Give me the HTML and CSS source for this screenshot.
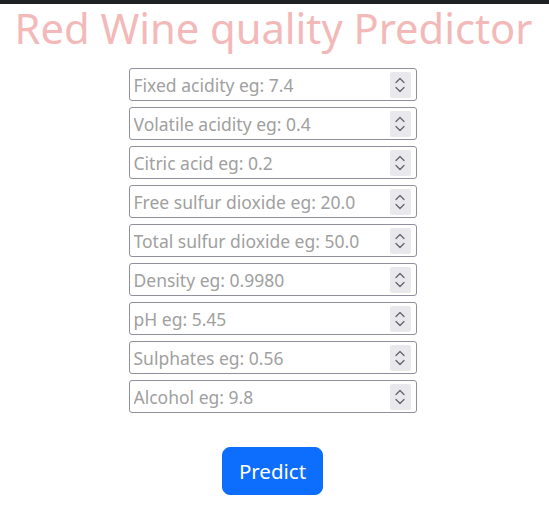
FILE: index.html
```html
<!DOCTYPE html>
<html lang="en">
<head>
<meta charset="utf-8">
<title>Red Wine quality Predictor</title>
<link rel="stylesheet" href="styles.css">
</head>
<body>
<div class="topbar"></div>
<main class="page">
<h1 class="title">Red Wine quality Predictor</h1>
<form class="form">
  <label class="field"><input class="field-input" type="text" placeholder="Fixed acidity eg: 7.4"><span class="spin"><svg width="12" height="20" viewBox="0 0 12 20"><path d="M2 7.5 L6 3.5 L10 7.5 M2 12.5 L6 16.5 L10 12.5" fill="none" stroke="#60606b" stroke-width="1.2" stroke-linecap="round" stroke-linejoin="round"/></svg></span></label>
  <label class="field"><input class="field-input" type="text" placeholder="Volatile acidity eg: 0.4"><span class="spin"><svg width="12" height="20" viewBox="0 0 12 20"><path d="M2 7.5 L6 3.5 L10 7.5 M2 12.5 L6 16.5 L10 12.5" fill="none" stroke="#60606b" stroke-width="1.2" stroke-linecap="round" stroke-linejoin="round"/></svg></span></label>
  <label class="field"><input class="field-input" type="text" placeholder="Citric acid eg: 0.2"><span class="spin"><svg width="12" height="20" viewBox="0 0 12 20"><path d="M2 7.5 L6 3.5 L10 7.5 M2 12.5 L6 16.5 L10 12.5" fill="none" stroke="#60606b" stroke-width="1.2" stroke-linecap="round" stroke-linejoin="round"/></svg></span></label>
  <label class="field"><input class="field-input" type="text" placeholder="Free sulfur dioxide eg: 20.0"><span class="spin"><svg width="12" height="20" viewBox="0 0 12 20"><path d="M2 7.5 L6 3.5 L10 7.5 M2 12.5 L6 16.5 L10 12.5" fill="none" stroke="#60606b" stroke-width="1.2" stroke-linecap="round" stroke-linejoin="round"/></svg></span></label>
  <label class="field"><input class="field-input" type="text" placeholder="Total sulfur dioxide eg: 50.0"><span class="spin"><svg width="12" height="20" viewBox="0 0 12 20"><path d="M2 7.5 L6 3.5 L10 7.5 M2 12.5 L6 16.5 L10 12.5" fill="none" stroke="#60606b" stroke-width="1.2" stroke-linecap="round" stroke-linejoin="round"/></svg></span></label>
  <label class="field"><input class="field-input" type="text" placeholder="Density eg: 0.9980"><span class="spin"><svg width="12" height="20" viewBox="0 0 12 20"><path d="M2 7.5 L6 3.5 L10 7.5 M2 12.5 L6 16.5 L10 12.5" fill="none" stroke="#60606b" stroke-width="1.2" stroke-linecap="round" stroke-linejoin="round"/></svg></span></label>
  <label class="field"><input class="field-input" type="text" placeholder="pH eg: 5.45"><span class="spin"><svg width="12" height="20" viewBox="0 0 12 20"><path d="M2 7.5 L6 3.5 L10 7.5 M2 12.5 L6 16.5 L10 12.5" fill="none" stroke="#60606b" stroke-width="1.2" stroke-linecap="round" stroke-linejoin="round"/></svg></span></label>
  <label class="field"><input class="field-input" type="text" placeholder="Sulphates eg: 0.56"><span class="spin"><svg width="12" height="20" viewBox="0 0 12 20"><path d="M2 7.5 L6 3.5 L10 7.5 M2 12.5 L6 16.5 L10 12.5" fill="none" stroke="#60606b" stroke-width="1.2" stroke-linecap="round" stroke-linejoin="round"/></svg></span></label>
  <label class="field"><input class="field-input" type="text" placeholder="Alcohol eg: 9.8"><span class="spin"><svg width="12" height="20" viewBox="0 0 12 20"><path d="M2 7.5 L6 3.5 L10 7.5 M2 12.5 L6 16.5 L10 12.5" fill="none" stroke="#60606b" stroke-width="1.2" stroke-linecap="round" stroke-linejoin="round"/></svg></span></label>
  <button class="btn" type="button">Predict</button>
</form>
</main>
</body>
</html>
```
FILE: styles.css
```css
* { box-sizing: border-box; }
html, body { margin: 0; padding: 0; background: #fff; }
body { font-family: "Noto Sans", "DejaVu Sans", sans-serif; color: #212529; }
.topbar { height: 4px; background: #1f2124; }
.page { padding-right: 2px; }
.title {
  margin: 0;
  text-align: center;
  font-family: "Noto Sans", sans-serif;
  font-weight: 400;
  font-size: 41.7px;
  line-height: 48px;
  color: #f3b9b9;
}
.form {
  width: 290px;
  padding-right: 2px;
  margin: 16px auto 0;
  display: flex;
  flex-direction: column;
  align-items: stretch;
  gap: 6px;
}
.field {
  display: flex;
  align-items: center;
  height: 33px;
  border: 1px solid #8f8f9d;
  border-radius: 3px;
  padding: 0 5px 0 4px;
  background: #fff;
}
.field-input {
  flex: 1;
  min-width: 0;
  border: none;
  outline: none;
  padding: 0;
  background: transparent;
  font-family: "Noto Sans", sans-serif;
  font-size: 17.5px;
  color: #212529;
}
.field-input::placeholder { color: #a0a0a0; opacity: 1; }
.spin {
  width: 21px;
  height: 26px;
  background: #e9e9ed;
  border-radius: 2px;
  display: flex;
  align-items: center;
  justify-content: center;
}
.btn {
  align-self: center;
  margin-top: 28px;
  height: 48px;
  padding: 0 16px;
  border: 1px solid #0d6efd;
  border-radius: 8px;
  background: #0d6efd;
  color: #fff;
  font-family: "Noto Sans", sans-serif;
  font-size: 20.5px;
  line-height: 1.5;
}
```
